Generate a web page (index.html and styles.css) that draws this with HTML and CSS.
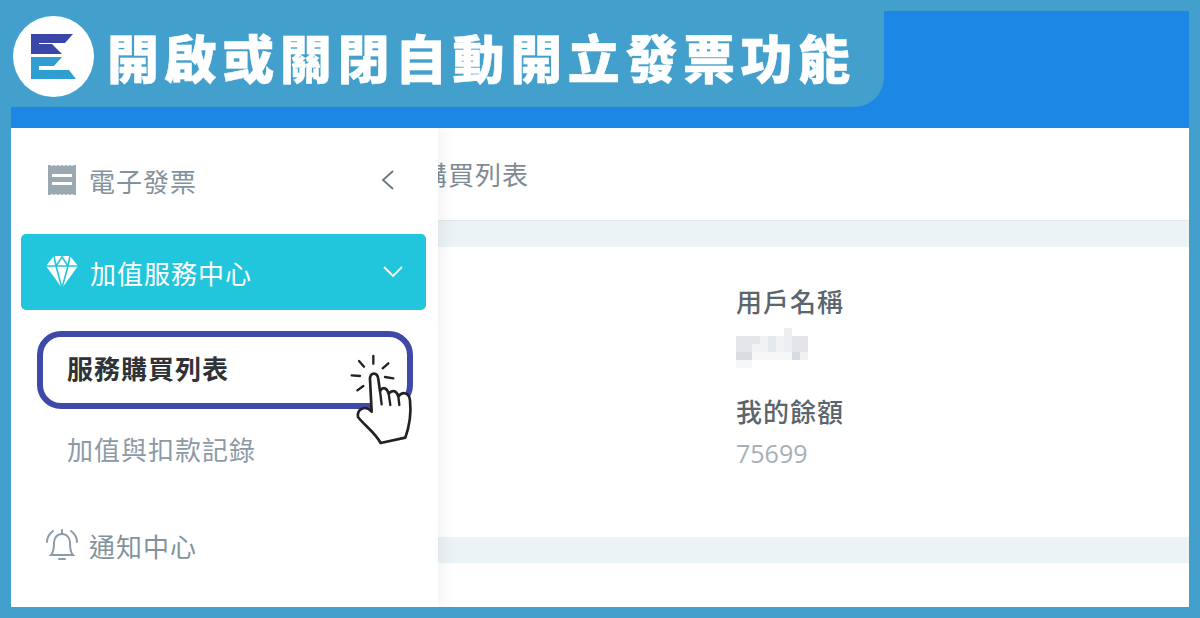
FILE: index.html
```html
<!DOCTYPE html>
<html lang="zh-Hant">
<head>
<meta charset="UTF-8" />
<meta name="viewport" content="width=device-width, initial-scale=1" />
<title>開啟或關閉自動開立發票功能</title>
<link rel="stylesheet" href="styles.css">
</head>
<body>

<div class="banner">
  <div class="logo">
    <svg width="81" height="81" viewBox="13 16 81 81">
      <path fill="#3a47a8" d="M31 34H73L65 43H39V44H52L62 54H31Z" />
      <path fill="#2f9fd2" d="M31 57H62L54 66H39V70H69L76 79H31Z" />
    </svg>
  </div>
  <h1>開啟或關閉自動開立發票功能</h1>
</div>

<div class="frame">
  <div class="topbar"></div>
  <div class="app">
    <aside class="sidebar">
      <div class="nav-item nav-first">
        <svg class="nav-icon" width="32" height="32" viewBox="0 0 32 32">
          <path fill="#9aa8b2" d="M2 1h2l2 1 2-1 2 1 2-1 2 1 2-1 2 1 2-1 2 1 2-1 2 1 2-1h2v30h-2l-2-1-2 1-2-1-2 1-2-1-2 1-2-1-2 1-2-1-2 1-2-1-2 1h-2z" />
          <rect fill="#fff" x="6" y="10" width="20" height="3" />
          <rect fill="#fff" x="6" y="18" width="20" height="3" />
        </svg>
        <span>電子發票</span>
        <svg class="chevron chevron-left" width="14" height="22" viewBox="0 0 14 22">
          <path d="M12 2L2 11L12 20" fill="none" stroke="#66757f" stroke-width="1.800" />
        </svg>
      </div>

      <div class="nav-item nav-open">
        <svg class="nav-icon" width="34" height="34" viewBox="0 0 34 34">
          <path fill="#fff" d="M9 1H25L33 11L17 33L1 11Z" />
          <path fill="none" stroke="#22c6dc" stroke-width="1.600" d="M1 11H33M9 1L11 11L17 33L23 11L25 1M11 11L17 2L23 11" />
        </svg>
        <span>加值服務中心</span>
        <svg class="chevron" width="20" height="12" viewBox="0 0 20 12">
          <path d="M1 1L10 10L19 1" fill="none" stroke="#fff" stroke-width="1.800" />
        </svg>
      </div>

      <div class="sub-item sub-active">
        服務購買列表
        <svg class="hand" width="100" height="110" viewBox="0 0 300 330">
          <g fill="none" stroke="#222" stroke-width="7" stroke-linecap="round">
            <path d="M130 45V68M87 60L102 77M175 67L158 82M65 103L90 105M165 108L190 112M82 148L100 135" />
          </g>
          <path fill="#fff" stroke="#222" stroke-width="8" stroke-linejoin="round" d="M120 115C119 92 143 92 145 115L150 150C160 135 172 142 176 158C188 144 200 150 205 166C218 150 238 155 240 178C244 215 240 250 226 290L152 306C135 275 105 255 84 228C80 205 105 190 125 212Z" />
          <path fill="none" stroke="#222" stroke-width="7" stroke-linecap="round" d="M150 150L155 190M176 158L181 192M205 166L208 192" />
        </svg>
      </div>
      <div class="sub-item">加值與扣款記錄</div>

      <div class="nav-item nav-last">
        <svg class="nav-icon" width="34" height="34" viewBox="0 0 34 34">
          <g fill="none" stroke="#8d9ca8" stroke-width="2">
            <path d="M6 27C9 24 9 20 9 15C9 10 12 6 17 6C22 6 25 10 25 15C25 20 25 24 28 27Z" />
            <path d="M17 2V6M14 31H20" stroke-linecap="round" />
            <path d="M2 14C2 9 4 6 8 3M32 14C32 9 30 6 26 3" stroke-linecap="round" />
          </g>
        </svg>
        <span>通知中心</span>
      </div>
    </aside>

    <main class="main">
      <div class="breadcrumb"><span>服務購買列表</span></div>
      <div class="band"></div>
      <div class="info">
        <div class="label">用戶名稱</div>
        <svg class="blurred" width="72" height="40" viewBox="0 0 72 40">
          <rect x="0" y="8" width="72" height="16" fill="#f0f2f4" />
          <rect x="0" y="8" width="24" height="16" fill="#e4e6ea" />
          <rect x="0" y="24" width="16" height="8" fill="#d9dce2" />
          <rect x="16" y="16" width="8" height="8" fill="#f1f3f5" />
          <rect x="32" y="8" width="8" height="16" fill="#e2e9ec" />
          <rect x="48" y="0" width="8" height="24" fill="#eceef1" />
          <rect x="56" y="8" width="16" height="16" fill="#e3e5ea" />
          <rect x="56" y="24" width="8" height="8" fill="#d8dbe1" />
          <rect x="16" y="24" width="40" height="8" fill="#f6f7f8" />
          <rect x="64" y="24" width="8" height="8" fill="#eef0f3" />
          <rect x="0" y="32" width="16" height="8" fill="#f6f7f9" />
        </svg>
        <div class="label label-gap">我的餘額</div>
        <div class="value">75699</div>
      </div>
      <div class="band"></div>
    </main>
  </div>
</div>

</body>
</html>
```

FILE: styles.css
```css
* {
  box-sizing: border-box;
}
html, body {
  height: 100%;
}
body {
  margin: 0;
  background: #43a0cd;
  font-family: "Noto Sans CJK TC", "Noto Sans", sans-serif;
  overflow: hidden;
}
.banner {
  position: absolute;
  left: 0;
  top: 0;
  z-index: 3;
  width: 884px;
  height: 107px;
  padding: 16px 0 0 13px;
  display: flex;
  align-items: flex-start;
  background: #43a0cd;
  border-bottom-right-radius: 30px;
}
.logo {
  width: 81px;
  height: 81px;
  border-radius: 50%;
  background: #fff;
}
.logo svg {
  display: block;
}
h1 {
  margin: 0 0 0 13px;
  color: #fff;
  font-size: 52px;
  line-height: 81px;
  font-weight: 900;
  letter-spacing: 5.6px;
  white-space: nowrap;
  -webkit-text-stroke: 0.5px #fff;
}
.frame {
  height: 100%;
  padding: 11px;
  display: flex;
  flex-direction: column;
}
.topbar {
  height: 117px;
  background: #1c87e4;
}
.app {
  flex: 1;
  display: flex;
  background: #fff;
  min-height: 0;
  overflow: hidden;
}
.sidebar {
  position: relative;
  z-index: 1;
  width: 427px;
  padding: 0 12px 0 10px;
  background: #fff;
  box-shadow: 6px 0 14px rgba(0, 0, 0, 0.05);
}
.nav-item {
  display: flex;
  align-items: center;
  height: 76px;
  margin-top: 14px;
  padding: 0 24px 0 24px;
  color: #84929e;
  font-size: 26px;
  letter-spacing: 1px;
}
.nav-item span {
  flex: 1;
  margin-left: 10px;
}
.nav-first {
  padding-left: 25px;
}
.nav-first span {
  margin-left: 11px;
}
.nav-icon {
  flex: none;
}
.chevron-left {
  margin-right: 7px;
}
.nav-open {
  margin-top: 16px;
  padding-right: 23px;
  color: #fff;
  background: #22c6dc;
  border-radius: 5px;
}
.nav-open span {
  margin-left: 11px;
}
.nav-last {
  margin-top: 17px;
}
.sub-item {
  height: 78px;
  margin: 3px 13px 0 16px;
  padding: 0 0 6px 30px;
  display: flex;
  align-items: center;
  color: #8d9aa5;
  font-size: 26px;
  letter-spacing: 1px;
}
.sub-active {
  position: relative;
  margin-top: 21px;
  padding-left: 24px;
  color: #2f3338;
  font-weight: 700;
  border: 6px solid #3f4aa8;
  border-radius: 24px;
}
.hand {
  position: absolute;
  left: 287px;
  top: 4px;
}
.main {
  flex: 1;
  min-width: 0;
  display: flex;
  flex-direction: column;
}
.breadcrumb {
  height: 93px;
  padding-bottom: 2px;
  display: flex;
  align-items: center;
  margin-left: -71px;
  color: #7f8b94;
  font-size: 26px;
  letter-spacing: 1px;
  border-bottom: 1px solid #e3e8ea;
}
.band {
  height: 26px;
  background: #ecf3f6;
}
.info {
  height: 290px;
  padding: 35px 0 0 298px;
}
.label {
  color: #5b656e;
  font-size: 26px;
  line-height: 38px;
  letter-spacing: 1px;
  font-weight: 500;
}
.label-gap {
  margin-top: 24px;
}
.blurred {
  display: block;
  margin-top: 8px;
}
.value {
  margin-top: 4px;
  color: #a6b0b8;
  font-family: "Open Sans", sans-serif;
  font-size: 25px;
  line-height: 38px;
}
```
